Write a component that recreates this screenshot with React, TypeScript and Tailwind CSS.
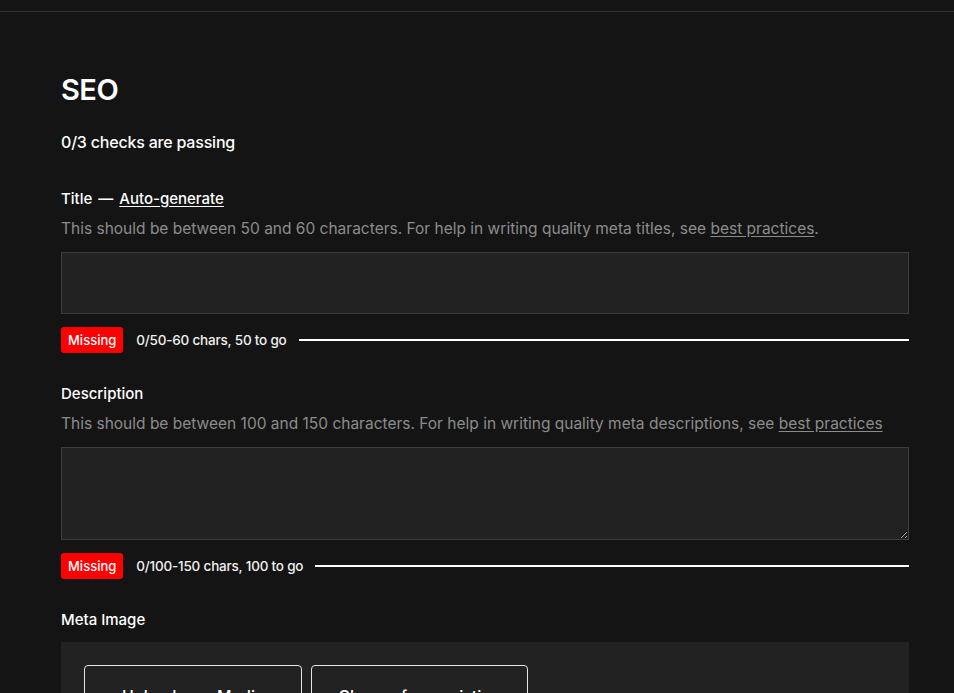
const Status = ({ text }: { text: string }) => {
  return (
    <div className="mt-[13px] flex items-center h-[26px]">
      <span className="bg-[#ff0000] text-white text-[13px] font-medium leading-[26px] px-[7px] rounded-[3px]">
        Missing
      </span>
      <span className="ml-[13px] text-[13.5px] font-medium text-[#f0f0f0] tracking-[-0.2px] whitespace-nowrap">
        {text}
      </span>
      <div className="ml-[12px] flex-1 h-[2px] bg-white"></div>
    </div>
  );
};

export default function App() {
  return (
    <div className="min-h-screen bg-[#141414] text-white font-['Inter',sans-serif] overflow-hidden">
      <div className="h-[12px] border-b border-[#333333]"></div>

      <div className="pl-[61px] pr-[45px] w-[954px]">
        <h1 className="pt-[60px] text-[29px] leading-[36px] font-semibold tracking-[-0.5px]">SEO</h1>
        <p className="mt-[22px] text-[16px] leading-[24px] font-medium tracking-[-0.2px]">0/3 checks are passing</p>

        {/* Title */}
        <div className="mt-[34px] text-[15px] leading-[22px] font-medium">
          Title <span className="mx-[2px]">—</span>{' '}
          <span className="underline underline-offset-2">Auto-generate</span>
        </div>
        <p className="mt-[8px] text-[15.5px] leading-[22px] text-[#8c8c8c] whitespace-nowrap">
          This should be between 50 and 60 characters. For help in writing quality meta titles, see{' '}
          <span className="underline underline-offset-2">best practices</span>.
        </p>
        <input
          className="mt-[12px] block w-full h-[62px] bg-[#222222] border border-[#3d3d3d] outline-none px-4 text-white"
          type="text"
        />
        <Status text="0/50-60 chars, 50 to go" />

        {/* Description */}
        <div className="mt-[30px] text-[15px] leading-[22px] font-medium">Description</div>
        <p className="mt-[8px] text-[15.5px] leading-[22px] text-[#8c8c8c] whitespace-nowrap">
          This should be between 100 and 150 characters. For help in writing quality meta descriptions, see{' '}
          <span className="underline underline-offset-2">best practices</span>
        </p>
        <textarea className="mt-[12px] block w-full h-[93px] bg-[#222222] border border-[#3d3d3d] outline-none px-4 py-3 text-white resize-y"></textarea>
        <Status text="0/100-150 chars, 100 to go" />

        {/* Meta Image */}
        <div className="mt-[30px] text-[15px] leading-[22px] font-medium">Meta Image</div>
        <div className="mt-[11px] bg-[#222222] px-[23px] pt-[23px] pb-[23px] flex gap-[9px]">
          <button className="w-[218px] border border-[#e6e6e6] rounded-[4px] py-[18px] text-[16px] leading-[24px] font-medium text-white">
            Upload new Media
          </button>
          <button className="w-[217px] border border-[#e6e6e6] rounded-[4px] py-[18px] text-[16px] leading-[24px] font-medium text-white">
            Choose from existing
          </button>
        </div>
      </div>
    </div>
  );
}
